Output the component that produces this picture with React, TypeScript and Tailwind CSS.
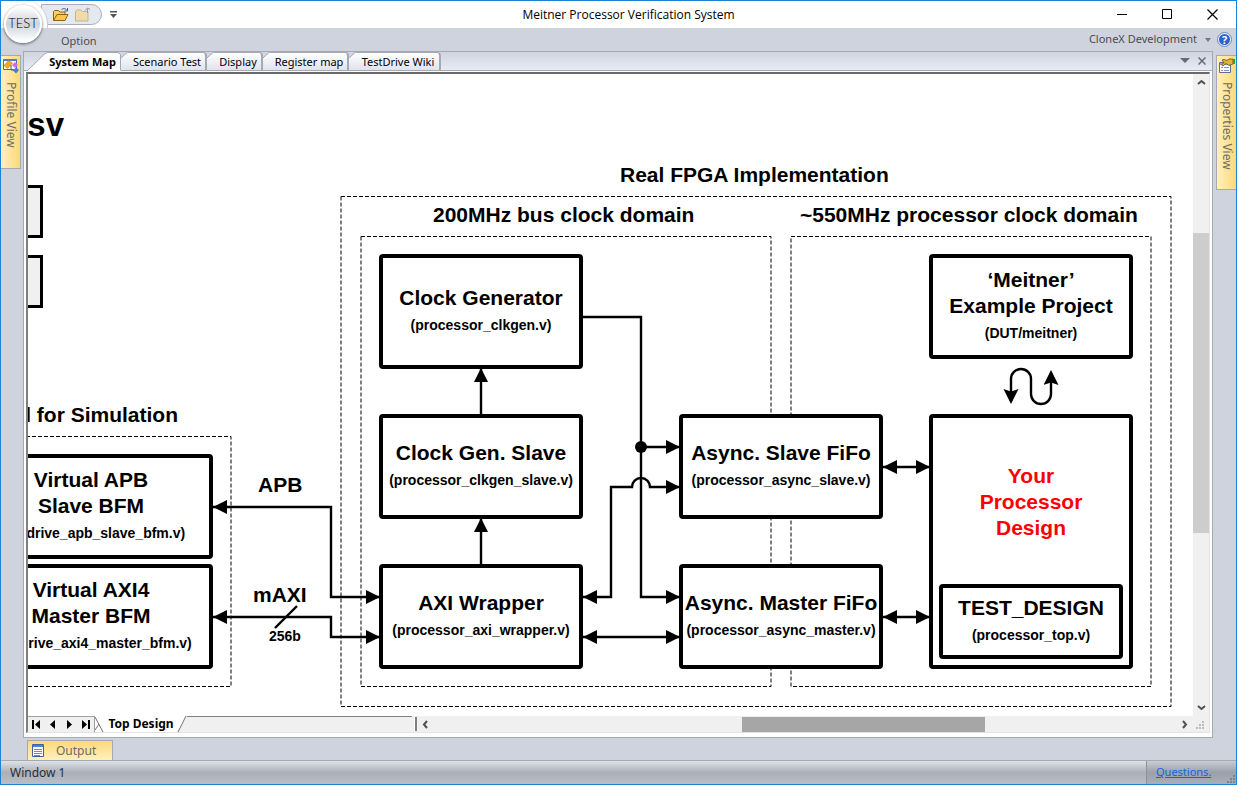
import React from "react";

type NodeProps = { box: string; lines: string[]; file?: string; pad: string; red?: boolean };

function Block({ box, lines, file, pad, red }: NodeProps) {
  return (
    <div className={`absolute flex flex-col items-center rounded-sm border-4 border-black bg-white whitespace-nowrap ${box} ${pad}`}>
      {lines.map((l) => (
        <span key={l} className={`text-[21px] leading-[26px] font-bold ${red ? "text-[#ff0000]" : "text-black"}`}>{l}</span>
      ))}
      {file && <span className="mt-1 text-[14px] leading-5 font-bold">{file}</span>}
    </div>
  );
}

function Label({ at, children }: { at: string; children: React.ReactNode }) {
  return <span className={`absolute text-[21px] leading-6 font-bold whitespace-nowrap ${at}`}>{children}</span>;
}

function Wires() {
  return (
    <svg className="absolute top-0 left-0" width="1165" height="642" viewBox="28 74 1165 642" fill="none" stroke="#000" strokeWidth="2.4" aria-hidden="true">
      <defs>
        <marker id="arrow" markerUnits="userSpaceOnUse" markerWidth="16" markerHeight="16" refX="14" refY="7.5" orient="auto-start-reverse">
          <path d="M0 .5 14 7.5 0 14.5Z" fill="#000" stroke="none" />
        </marker>
        <marker id="barb" markerUnits="userSpaceOnUse" markerWidth="16" markerHeight="16" refX="12" refY="7.5" orient="auto-start-reverse">
          <path d="M0 0 15 7.5 0 15 2.500 7.500Z" fill="#000" stroke="none" />
        </marker>
      </defs>
      <path d="M583 317H641V597H680" markerEnd="url(#arrow)" />
      <path d="M641 447H680" markerEnd="url(#arrow)" />
      <circle cx="641" cy="447" r="6" fill="#000" stroke="none" />
      <path d="M583 597H611V487H632A9 9 0 0 1 650 487H680" markerStart="url(#arrow)" markerEnd="url(#arrow)" />
      <path d="M583 637H680" markerStart="url(#arrow)" markerEnd="url(#arrow)" />
      <path d="M481 416V368" markerEnd="url(#arrow)" />
      <path d="M481 566V518" markerEnd="url(#arrow)" />
      <path d="M213 507H331V597H380" markerStart="url(#arrow)" markerEnd="url(#arrow)" />
      <path d="M213 617H331V637H380" markerStart="url(#arrow)" markerEnd="url(#arrow)" />
      <path d="M275 628 297 606" />
      <path d="M883 467H930" markerStart="url(#arrow)" markerEnd="url(#arrow)" />
      <path d="M883 617H930" markerStart="url(#arrow)" markerEnd="url(#arrow)" />
      <path d="M1011 401V379A10 10 0 0 1 1031 379V394A10 10 0 0 0 1051 394V373" markerStart="url(#barb)" markerEnd="url(#barb)" />
    </svg>
  );
}

function Zones() {
  return (
    <svg className="absolute top-0 left-0" width="1165" height="642" viewBox="28 74 1165 642" fill="none" stroke="#000" strokeWidth="1" strokeDasharray="4 2" aria-hidden="true">
      <path d="M20 436.500H231V686.500H20" />
      <path d="M341 196.500H1171V706.500H341Z" />
      <path d="M361 236.500H771V686.500H361Z" />
      <path d="M791 236.500H1151V686.500H791Z" />
    </svg>
  );
}

function Folder({ faded }: { faded?: boolean }) {
  return (
    <svg width="18" height="16" viewBox="0 0 18 16" aria-hidden="true">
      {faded ? (
        <g>
          <path d="M1.500 14V4.500L3 3h4l1.500 1.500H14V14Z" fill="#efdca9" stroke="#c3b58f" />
          <path d="M13.500 6V1.500M11 3.500l2.500-2.500 2.500 1.500" stroke="#8a9dbb" fill="none" />
        </g>
      ) : (
        <g>
          <path d="M1.500 13.500v-9L2.500 3.500h4L8 5h5v3" fill="#f7cf63" stroke="#8c6416" />
          <path d="M1.500 13.500 5 7.500h11L13 13.500Z" fill="#fbc545" stroke="#8c6416" />
          <path d="M9.500 3c1-2 4-2 5.500.5M15.500 1v3h-3" stroke="#3f5f8d" fill="none" />
        </g>
      )}
    </svg>
  );
}

function ProfileIcon() {
  return (
    <svg width="18" height="16" viewBox="0 0 18 16" aria-hidden="true">
      <path d="M1.500 1.500h13v10h-13Z" fill="#fff" stroke="#4a6ea9" />
      <path d="M1 1h14v2H1Z" fill="#4a7fd6" />
      <path d="m6.500 2.500 4 2.500-5 5.500-3.500-3Z" fill="#f6a821" stroke="#c77a14" strokeWidth=".6" />
      <path d="m13 4 3 3-3 3-3-3Z" fill="#d56be0" />
      <path d="m14 9.500 3 2.500-3 3.500-3-3Z" fill="#3f7fe0" />
      <path d="M9 7v5h2" stroke="#555" fill="none" />
    </svg>
  );
}

function PropertiesIcon() {
  return (
    <svg width="17" height="16" viewBox="0 0 17 16" aria-hidden="true">
      <path d="M1.500 4.500h11v10h-11Z" fill="#fff" stroke="#5d6f94" />
      <path d="M2 5h10v2H2Z" fill="#86a5dc" />
      <path d="M3 9.500h2m1 0h5M3 12.500h2m1 0h5" stroke="#7c94c4" />
      <path d="m4 2 2-.5 3 1L11 1h4v5l-4 1.500-3-2L5 8 3.500 7 6 4.500Z" fill="#e2b437" stroke="#66500f" strokeWidth=".8" />
      <path d="M15 1h2v5h-2Z" fill="#2f9d46" />
    </svg>
  );
}

const tabs = [
  { name: "Scenario Test", w: "w-[86px]" },
  { name: "Display", w: "w-[56px]" },
  { name: "Register map", w: "w-[86px]" },
  { name: "TestDrive Wiki", w: "w-[92px]" },
];

function TabStrip() {
  return (
    <div className="flex h-[19px] items-end border-b border-[#a5a9b4] bg-linear-to-b from-[#d0d4de] to-[#e6ebf6] text-[11px] text-black">
      <div role="tablist" className="flex h-[18px] pl-1">
        <button role="tab" aria-selected="true" className="relative -mb-px h-[19px] w-[93px] pl-4 leading-[18px] font-bold whitespace-nowrap">
          <svg className="absolute inset-0" width="93" height="19" viewBox="0 0 93 19" aria-hidden="true">
            <path d="M0 18.500 16 2.500 19 .5H90l2.500 2V19H0Z" fill="#fff" />
            <path d="M0 18 16 2.500 19 .5H90l2.500 2V18" fill="none" stroke="#a5a9b4" />
          </svg>
          <span className="relative">System Map</span>
        </button>
        {tabs.map((t) => (
          <button key={t.name} role="tab" aria-selected="false" className={`relative h-[18px] rounded-tr-sm border-t border-r-2 border-[#a5a9b4] bg-linear-to-b from-white to-[#dfe3ed] pl-2 text-center leading-[18px] whitespace-nowrap ${t.w}`}>
            <svg className="absolute -top-px left-0" width="7" height="7" viewBox="0 0 7 7" aria-hidden="true">
              <path d="M0 0H7L0 6Z" fill="#d2d6e0" />
              <path d="M0 6 6 .5" stroke="#a5a9b4" />
            </svg>
            {t.name}
          </button>
        ))}
      </div>
      <div className="ml-auto flex h-full items-center gap-2 pr-1.5 text-[#666a72]">
        <button aria-label="Tab list">
          <svg width="10" height="6" viewBox="0 0 10 6"><path d="M0 0h10L5 5Z" fill="currentColor" /></svg>
        </button>
        <button aria-label="Close tab">
          <svg width="8" height="8" viewBox="0 0 8 8"><path d="m.5.5 7 7m0-7-7 7" stroke="currentColor" strokeWidth="1.500" /></svg>
        </button>
      </div>
    </div>
  );
}

function Diagram() {
  return (
    <div className="relative min-h-[600px] min-w-0 flex-1 overflow-hidden bg-white font-['Liberation_Sans',Arial,sans-serif] text-black">
      <Zones />
      <span className="absolute top-[31px] right-[1129px] text-[33px] leading-10 font-bold">sv</span>
      <div className="absolute top-[111px] left-[-60px] h-[53px] w-[75px] border-3 border-black bg-[#f0f0f0]" />
      <div className="absolute top-[181px] left-[-60px] h-[53px] w-[75px] border-3 border-black bg-[#f0f0f0]" />
      <Label at="top-[89px] left-[592px]">Real FPGA Implementation</Label>
      <Label at="top-[129px] left-[405px]">200MHz bus clock domain</Label>
      <Label at="top-[129px] left-[772px]">~550MHz processor clock domain</Label>
      <Label at="top-[329px] right-[1015px]">Model for Simulation</Label>
      <Label at="top-[399px] left-[230px]">APB</Label>
      <Label at="top-[509px] left-[225px]">mAXI</Label>
      <span className="absolute top-[552px] left-[241px] text-[14px] leading-5 font-bold">256b</span>
      <Block box="top-[180px] left-[351px] h-[115px] w-[204px]" pad="pt-[27px]" lines={["Clock Generator"]} file="(processor_clkgen.v)" />
      <Block box="top-[340px] left-[351px] h-[105px] w-[204px]" pad="pt-[22px]" lines={["Clock Gen. Slave"]} file="(processor_clkgen_slave.v)" />
      <Block box="top-[490px] left-[351px] h-[105px] w-[204px]" pad="pt-[22px]" lines={["AXI Wrapper"]} file="(processor_axi_wrapper.v)" />
      <Block box="top-[340px] left-[651px] h-[105px] w-[204px]" pad="pt-[22px]" lines={["Async. Slave FiFo"]} file="(processor_async_slave.v)" />
      <Block box="top-[490px] left-[651px] h-[105px] w-[204px]" pad="pt-[22px]" lines={["Async. Master FiFo"]} file="(processor_async_master.v)" />
      <Block box="top-[180px] left-[901px] h-[105px] w-[204px]" pad="pt-[9px]" lines={["‘Meitner’", "Example Project"]} file="(DUT/meitner)" />
      <Block box="top-[340px] left-[901px] h-[255px] w-[204px]" pad="pt-[45px]" lines={["Your", "Processor", "Design"]} red />
      <Block box="top-[510px] left-[911px] h-[75px] w-[184px]" pad="pt-[7px]" lines={["TEST_DESIGN"]} file="(processor_top.v)" />
      <Block box="top-[380px] left-[-59px] h-[105px] w-[244px]" pad="pt-[9px]" lines={["Virtual APB", "Slave BFM"]} file="(testdrive_apb_slave_bfm.v)" />
      <Block box="top-[490px] left-[-59px] h-[105px] w-[244px]" pad="pt-[9px]" lines={["Virtual AXI4", "Master BFM"]} file="(testdrive_axi4_master_bfm.v)" />
      <Wires />
    </div>
  );
}

function Chevron({ d }: { d: string }) {
  return (
    <svg width="9" height="9" viewBox="0 0 9 9" fill="none" stroke="#505050" strokeWidth="2" aria-hidden="true">
      <path d={d} />
    </svg>
  );
}

function Grip() {
  return (
    <svg width="9" height="9" viewBox="0 0 9 9" fill="currentColor" aria-hidden="true">
      <path d="M6 0h2v2H6ZM3 3h2v2H3ZM6 3h2v2H6ZM0 6h2v2H0ZM3 6h2v2H3ZM6 6h2v2H6Z" />
    </svg>
  );
}

function SheetBar() {
  const nav = [
    { n: "First sheet", d: "M0 0h2v9H0ZM8 0v9L3 4.500Z" },
    { n: "Previous sheet", d: "M7 0v9L2 4.500Z" },
    { n: "Next sheet", d: "M2 0v9l5-4.500Z" },
    { n: "Last sheet", d: "M1 0v9l5-4.500ZM7 0h2v9H7Z" },
  ];
  return (
    <div className="flex h-4 items-stretch bg-[#f0f0f0]">
      <div className="flex w-[67px] items-center justify-between border-t border-r border-[#a0a0a0] px-1 text-black">
        {nav.map((b) => (
          <button key={b.n} aria-label={b.n} className="flex">
            <svg width="9" height="9" viewBox="0 0 9 9"><path d={b.d} /></svg>
          </button>
        ))}
      </div>
      <button className="relative -mt-px h-[17px] w-[92px] bg-white text-center text-[12px] leading-[18px] font-bold text-black">
        <svg className="absolute inset-0" width="92" height="17" viewBox="0 0 92 17" aria-hidden="true">
          <path d="M92 0 82 17h10Z" fill="#f0f0f0" />
          <path d="M0 2 8 17M0 15 4 9M83 17 91 1" stroke="#707070" fill="none" />
        </svg>
        <span className="relative">Top Design</span>
      </button>
      <div className="w-[225px] border-t border-[#808080]" />
      <div className="my-px ml-0.5 w-[3px] border-r-2 border-[#808080] bg-white" />
      <div className="flex min-w-0 flex-1 items-center px-1">
        <button aria-label="Scroll left"><Chevron d="M6 1 3 4.500 6 8" /></button>
        <div className="grow-[312]" />
        <div className="h-[15px] w-[243px] bg-[#a6a6a6]" />
        <div className="grow-[195]" />
        <button aria-label="Scroll right"><Chevron d="M3 1 6 4.500 3 8" /></button>
      </div>
      <div className="flex w-4 items-end justify-end pr-1 pb-0.5 text-[#bcbcbc]"><Grip /></div>
    </div>
  );
}

export default function App() {
  return (
    <div className="relative flex min-h-screen flex-col border border-[#1883d7] bg-[#cfd3dd] font-['Noto_Sans',sans-serif] text-[12px] text-[#4a4c54]">
      <header className="relative flex h-[27px] items-center overflow-hidden bg-white">
        <div className="ml-[40px] flex h-[21px] w-[61px] items-center gap-1 rounded-r-full border border-[#a9adb8] bg-[#e4e8ef] pl-2.5">
          <button aria-label="Open"><Folder /></button>
          <button aria-label="Close folder"><Folder faded /></button>
        </div>
        <div className="absolute -top-px -left-px size-12 rounded-full border-r border-[#c4c8d0] bg-white" />
        <button aria-label="Customize toolbar" className="ml-2">
          <svg width="7" height="8" viewBox="0 0 7 8"><path d="M0 0h7v1.500H0ZM0 3h7L3.500 7Z" fill="#555" /></svg>
        </button>
        <h1 className="pointer-events-none absolute inset-x-0 pl-5 text-center font-['Open_Sans','Noto_Sans',sans-serif] text-[12px] text-black">Meitner Processor Verification System</h1>
        <div className="ml-auto flex items-center gap-[34px] pr-[18px]">
          <button aria-label="Minimize"><svg width="11" height="11" viewBox="0 0 11 11"><path d="M0 5.500h10" stroke="#000" /></svg></button>
          <button aria-label="Maximize"><svg width="11" height="11" viewBox="0 0 11 11"><path d="M.5.5h9v9h-9Z" fill="none" stroke="#000" /></svg></button>
          <button aria-label="Close"><svg width="11" height="11" viewBox="0 0 11 11"><path d="m.5.5 10 10m0-10-10 10" stroke="#000" strokeWidth="1.200" /></svg></button>
        </div>
      </header>
      <button aria-label="Application menu" className="absolute top-1 left-[3px] flex size-[38px] items-center justify-center rounded-full border-2 border-white bg-linear-to-b from-white via-[#cdd2da] to-white font-['Lato',sans-serif] text-[13px] font-light text-black shadow-[0_1px_3px_#555]">
        TEST
      </button>
      <nav className="flex h-[23px] items-center text-[11px]">
        <button className="mt-1 ml-[60px]">Option</button>
        <button className="ml-auto flex items-center gap-2">
          CloneX Development
          <svg width="6" height="4" viewBox="0 0 6 4"><path d="M0 0h6L3 4Z" fill="#777" /></svg>
        </button>
        <button aria-label="Help" className="mr-1 ml-1.5">
          <svg width="15" height="15" viewBox="0 0 15 15"><circle cx="7.500" cy="7.500" r="7" fill="#eef3fb" stroke="#6e87b5" /><circle cx="7.500" cy="7.500" r="5.500" fill="#2b62cf" /><text x="7.500" y="11.500" textAnchor="middle" fontSize="11" fontWeight="700" fill="#fff">?</text></svg>
        </button>
      </nav>
      <main className="flex flex-1 items-stretch">
        <aside className="w-[22px] pt-1">
          <button className="flex h-[114px] w-5 flex-col items-center gap-2 border border-l-0 border-[#a5a9b4] bg-linear-to-r from-[#fff0bd] to-[#ffd978] pt-0.5 text-[#6d6a66]">
            <ProfileIcon />
            <span className="[writing-mode:vertical-rl]">Profile View</span>
          </button>
        </aside>
        <section className="flex min-w-0 flex-1 flex-col border border-[#a5a9b4] bg-white">
          <TabStrip />
          <div className="mx-0.5 mt-px mb-1 flex flex-1 flex-col border-t-2 border-r border-b border-l-2 border-t-[#696969] border-r-[#e3e3e3] border-b-[#e3e3e3] border-l-[#808080]">
            <div className="flex flex-1">
              <Diagram />
              <div className="flex w-4 flex-col items-center bg-[#f0f0f0] py-1">
                <button aria-label="Scroll up"><Chevron d="M1 6 4.500 3 8 6" /></button>
                <div className="mt-[146px] h-[300px] w-full bg-[#cdcdcd]" />
                <button aria-label="Scroll down" className="mt-auto"><Chevron d="M1 3 4.500 6 8 3" /></button>
              </div>
            </div>
            <SheetBar />
          </div>
        </section>
        <aside className="flex w-[23px] justify-end pt-1">
          <button className="flex h-[135px] w-5 flex-col items-center gap-2 border border-r-0 border-[#a5a9b4] bg-linear-to-r from-[#fff0bd] to-[#ffd978] pt-0.5 text-[#6d6a66]">
            <PropertiesIcon />
            <span className="[writing-mode:vertical-rl]">Properties View</span>
          </button>
        </aside>
      </main>
      <div className="flex h-[22px] items-end pl-[26px]">
        <button className="flex h-5 w-[86px] items-center gap-3 border border-b-0 border-[#a5a9b4] bg-linear-to-b from-[#ffd978] to-[#fff0bd] pl-1 text-[#6d6a66]">
          <svg width="12" height="13" viewBox="0 0 12 13" aria-hidden="true"><path d="M.5.5h11v12H.5Z" fill="#fff" stroke="#3e60a8" /><path d="M1 1h10v2H1Z" fill="#4a7fd6" /><path d="M2 5.500h8m-8 2h8m-8 2h8m-8 2h6" stroke="#888" /></svg>
          Output
        </button>
      </div>
      <footer className="flex h-6 items-center border-t border-[#a5a9b4] bg-linear-to-b from-[#dfe2e8] via-[#aab0b9] to-[#b9bec7] pl-[9px] text-[#2b2d33]">
        <span>Window 1</span>
        <div className="ml-auto flex h-full w-[90px] items-center border-l border-[#8b9099] bg-linear-to-b from-[#c9cdd5] via-[#9aa1ab] to-[#a9aeb8] pl-[9px]">
          <a href="#questions" className="text-[11px] text-[#1166dd] underline">Questions.</a>
          <span className="mt-auto ml-auto text-[#7b7f87]"><Grip /></span>
        </div>
      </footer>
    </div>
  );
}
